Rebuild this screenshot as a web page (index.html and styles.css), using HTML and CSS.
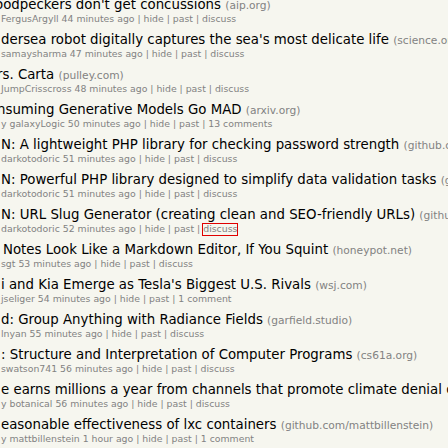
FILE: index.html
```html
<!DOCTYPE html>
<html>
<head>
<meta charset="utf-8">
<link rel="stylesheet" href="styles.css">
</head>
<body>
<div class="list">
  <div class="item"><div class="title cut">oodpeckers don't get concussions <span class="site">(aip.org)</span></div><div class="sub">FergusArgyll 44 minutes ago | hide | past | discuss</div></div>
  <div class="item"><div class="title">dersea robot digitally captures the sea's most delicate life <span class="site">(science.org)</span></div><div class="sub">samaysharma 47 minutes ago | hide | past | discuss</div></div>
  <div class="item"><div class="title cut-s">rs. Carta <span class="site">(pulley.com)</span></div><div class="sub">JumpCrisscross 48 minutes ago | hide | past | discuss</div></div>
  <div class="item"><div class="title cut-s">nsuming Generative Models Go MAD <span class="site">(arxiv.org)</span></div><div class="sub">y galaxyLogic 50 minutes ago | hide | past | 13 comments</div></div>
  <div class="item"><div class="title">N: A lightweight PHP library for checking password strength <span class="site">(github.com)</span></div><div class="sub">darkotodoric 51 minutes ago | hide | past | discuss</div></div>
  <div class="item"><div class="title">N: Powerful PHP library designed to simplify data validation tasks <span class="site">(github.com)</span></div><div class="sub">darkotodoric 51 minutes ago | hide | past | discuss</div></div>
  <div class="item"><div class="title">N: URL Slug Generator (creating clean and SEO-friendly URLs) <span class="site">(github.com)</span></div><div class="sub">darkotodoric 52 minutes ago | hide | past | <span class="focus">discuss</span></div></div>
  <div class="item"><div class="title lead">Notes Look Like a Markdown Editor, If You Squint <span class="site">(honeypot.net)</span></div><div class="sub">sgt 53 minutes ago | hide | past | discuss</div></div>
  <div class="item"><div class="title">i and Kia Emerge as Tesla's Biggest U.S. Rivals <span class="site">(wsj.com)</span></div><div class="sub">jseliger 54 minutes ago | hide | past | 1 comment</div></div>
  <div class="item"><div class="title">d: Group Anything with Radiance Fields <span class="site">(garfield.studio)</span></div><div class="sub">lnyan 55 minutes ago | hide | past | discuss</div></div>
  <div class="item"><div class="title">: Structure and Interpretation of Computer Programs <span class="site">(cs61a.org)</span></div><div class="sub">swatson741 56 minutes ago | hide | past | discuss</div></div>
  <div class="item"><div class="title">e earns millions a year from channels that promote climate denial content <span class="site">(theguardian.com)</span></div><div class="sub">y botanical 56 minutes ago | hide | past | discuss</div></div>
  <div class="item"><div class="title">easonable effectiveness of lxc containers <span class="site">(github.com/mattbillenstein)</span></div><div class="sub">y mattbillenstein 1 hour ago | hide | past | 1 comment</div></div>
</div>
</body>
</html>
```
FILE: styles.css
```css
html, body {
  margin: 0;
  padding: 0;
  background: #f6f6ef;
  overflow: hidden;
}
body {
  font-family: "DejaVu Sans", Verdana, sans-serif;
  width: 448px;
  height: 448px;
}
.list {
  margin-top: -4px;
  padding-left: 1px;
}
.item {
  height: 35px;
  white-space: nowrap;
}
.title {
  font-size: 13.33px;
  line-height: 17px;
  height: 17px;
  color: #000;
}
.cut {
  margin-left: -6px;
}
.cut-s {
  margin-left: -4px;
}
.lead {
  margin-left: 2px;
}
.site {
  font-size: 10.67px;
  color: #828282;
}
.sub {
  font-size: 9.33px;
  line-height: 12px;
  height: 12px;
  color: #828282;
}
.focus {
  display: inline-block;
  line-height: 9px;
  padding-bottom: 2px;
  outline: 1px solid #e00000;
}
```
